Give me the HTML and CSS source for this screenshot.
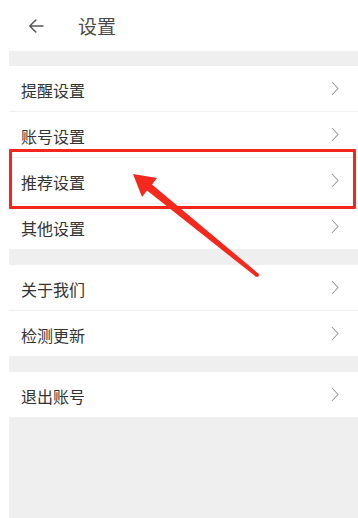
FILE: index.html
```html
<!DOCTYPE html>
<html lang="zh-CN">
<head>
<meta charset="utf-8">
<link rel="stylesheet" href="styles.css">
</head>
<body>
<div class="page">
  <header class="topbar">
    <svg class="back" width="16" height="14" viewBox="0 0 16 14"><path d="M15 7H1.8M7.8 1 1.8 7l6 6" fill="none" stroke="#555" stroke-width="1.5" stroke-linecap="round" stroke-linejoin="round"/></svg>
    <span class="title">设置</span>
  </header>
  <main class="content">
    <section class="group">
      <div class="row"><span>提醒设置</span><svg class="chev" width="8" height="15" viewBox="0 0 8 15"><path d="M1 1l6 6.5L1 14" fill="none" stroke="#9a9a9a" stroke-width="1.1"/></svg></div>
      <div class="row"><span>账号设置</span><svg class="chev" width="8" height="15" viewBox="0 0 8 15"><path d="M1 1l6 6.5L1 14" fill="none" stroke="#9a9a9a" stroke-width="1.1"/></svg></div>
      <div class="row"><span>推荐设置</span><svg class="chev" width="8" height="15" viewBox="0 0 8 15"><path d="M1 1l6 6.5L1 14" fill="none" stroke="#9a9a9a" stroke-width="1.1"/></svg></div>
      <div class="row"><span>其他设置</span><svg class="chev" width="8" height="15" viewBox="0 0 8 15"><path d="M1 1l6 6.5L1 14" fill="none" stroke="#9a9a9a" stroke-width="1.1"/></svg></div>
    </section>
    <section class="group">
      <div class="row"><span>关于我们</span><svg class="chev" width="8" height="15" viewBox="0 0 8 15"><path d="M1 1l6 6.5L1 14" fill="none" stroke="#9a9a9a" stroke-width="1.1"/></svg></div>
      <div class="row"><span>检测更新</span><svg class="chev" width="8" height="15" viewBox="0 0 8 15"><path d="M1 1l6 6.5L1 14" fill="none" stroke="#9a9a9a" stroke-width="1.1"/></svg></div>
    </section>
    <section class="group">
      <div class="row"><span>退出账号</span><svg class="chev" width="8" height="15" viewBox="0 0 8 15"><path d="M1 1l6 6.5L1 14" fill="none" stroke="#9a9a9a" stroke-width="1.1"/></svg></div>
    </section>
  </main>
  <div class="highlight"></div>
  <svg class="pointer" width="358" height="518" viewBox="0 0 358 518">
    <polygon points="133,174 157,178 152,184.4 258.3,273.5 255.7,276.5 147,190.6 142,197" fill="#f5281e"/>
    <circle cx="257" cy="275" r="2" fill="#f5281e"/>
  </svg>
</div>
</body>
</html>
```

FILE: styles.css
```css
html, body {
  margin: 0;
  padding: 0;
  background: #ffffff;
}
.page {
  position: relative;
  width: 358px;
  height: 518px;
  overflow: hidden;
  font-family: "Noto Sans CJK SC", "Noto Sans", sans-serif;
  background: #ffffff;
}
.topbar {
  height: 51px;
  display: flex;
  align-items: center;
  padding-left: 28px;
  box-sizing: border-box;
}
.back {
  display: block;
}
.title {
  margin-left: 34px;
  font-size: 19px;
  color: #4a4a4a;
  line-height: 1;
  margin-top: -1px;
}
.content {
  margin-left: 9px;
  height: 467px;
  background: #efefef;
  padding-top: 15px;
  box-sizing: border-box;
  display: flex;
  flex-direction: column;
  gap: 16px;
}
.group {
  background: #ffffff;
  display: flex;
  flex-direction: column;
}
.row {
  height: 45px;
  display: flex;
  align-items: center;
  justify-content: space-between;
  padding: 0 19px 0 12px;
  font-size: 16px;
  color: #333333;
}
.row + .row {
  border-top: 1px solid #efefef;
}
.row span {
  margin-top: 2px;
}
.chev {
  display: block;
}
.highlight {
  position: absolute;
  left: 9px;
  top: 149px;
  width: 341px;
  height: 54px;
  border: 3px solid #f3261d;
  border-radius: 1px;
}
.pointer {
  position: absolute;
  left: 0;
  top: 0;
  pointer-events: none;
}
```
